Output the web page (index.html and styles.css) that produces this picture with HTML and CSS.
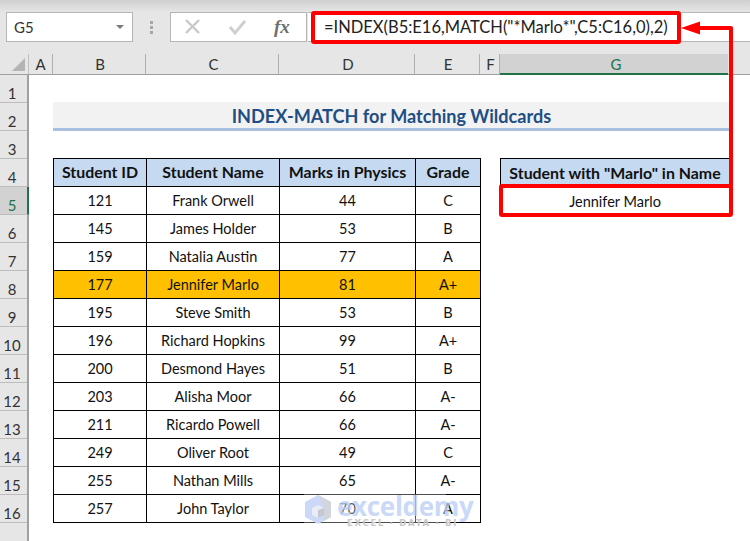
FILE: index.html
```html
<!DOCTYPE html>
<html lang="en">
<head>
<meta charset="utf-8">
<title>INDEX-MATCH for Matching Wildcards</title>
<link rel="stylesheet" href="styles.css">
</head>
<body>
<div class="app">
  <div class="topstrip"></div>
  <div class="fbar">
    <div class="namebox"><span>G5</span><i class="caret"></i></div>
    <div class="grip"><i></i><i></i><i></i></div>
    <div class="fbtns">
      <svg class="ficon" width="20" height="16" viewBox="0 0 20 16"><path d="M3 1l13 13M16 1L3 14" fill="none" stroke="#c8c8c8" stroke-width="2.4"/></svg>
      <svg class="ficon" width="20" height="16" viewBox="0 0 20 16"><path d="M3 8l5 6L18 2" fill="none" stroke="#cfcfcf" stroke-width="3"/></svg>
      <span class="fx">fx</span>
    </div>
    <div class="formula">=INDEX(B5:E16,MATCH("*Marlo*",C5:C16,0),2)</div>
  </div>
  <div class="colhead">
    <div class="corner"><i></i></div>
    <div class="ch a">A</div>
    <div class="ch b">B</div>
    <div class="ch c">C</div>
    <div class="ch d">D</div>
    <div class="ch e">E</div>
    <div class="ch f">F</div>
    <div class="ch g sel">G</div>
  </div>
  <div class="main">
    <div class="rowhead">
      <div class="rh">1</div><div class="rh">2</div><div class="rh">3</div><div class="rh">4</div>
      <div class="rh sel">5</div><div class="rh">6</div><div class="rh">7</div><div class="rh">8</div>
      <div class="rh">9</div><div class="rh">10</div><div class="rh">11</div><div class="rh">12</div>
      <div class="rh">13</div><div class="rh">14</div><div class="rh">15</div><div class="rh">16</div>
      <div class="rh"></div>
    </div>
    <div class="sheet">
      <div class="title">INDEX-MATCH for Matching Wildcards</div>
      <div class="tables">
        <div class="grid">
          <div class="hd">Student ID</div><div class="hd">Student Name</div><div class="hd">Marks in Physics</div><div class="hd">Grade</div>
          <div>121</div><div>Frank Orwell</div><div>44</div><div>C</div>
          <div>145</div><div>James Holder</div><div>53</div><div>B</div>
          <div>159</div><div>Natalia Austin</div><div>77</div><div>A</div>
          <div class="hl">177</div><div class="hl">Jennifer Marlo</div><div class="hl">81</div><div class="hl">A+</div>
          <div>195</div><div>Steve Smith</div><div>53</div><div>B</div>
          <div>196</div><div>Richard Hopkins</div><div>99</div><div>A+</div>
          <div>200</div><div>Desmond Hayes</div><div>51</div><div>B</div>
          <div>203</div><div>Alisha Moor</div><div>66</div><div>A-</div>
          <div>211</div><div>Ricardo Powell</div><div>66</div><div>A-</div>
          <div>249</div><div>Oliver Root</div><div>49</div><div>C</div>
          <div>255</div><div>Nathan Mills</div><div>65</div><div>A-</div>
          <div>257</div><div>John Taylor</div><div>70</div><div>A</div>
        </div>
        <div class="side">
          <div class="hd">Student with "Marlo" in Name</div>
          <div class="res">Jennifer Marlo</div>
        </div>
      </div>
    </div>
  </div>
  <svg class="annot" width="750" height="541" viewBox="0 0 750 541">
    <rect x="313" y="13" width="366" height="29" fill="none" stroke="#fe0000" stroke-width="4" rx="1"/>
    <rect x="501" y="186" width="230" height="29" fill="none" stroke="#fe0000" stroke-width="4" rx="1"/>
    <path d="M695 28H731V186" fill="none" stroke="#fe0000" stroke-width="4" stroke-linejoin="round"/>
    <path d="M681 28L700 21.5V34.5Z" fill="#fe0000"/>
  </svg>
  <div class="mark">
    <svg class="marklogo" width="28" height="31" viewBox="0 0 28 31"><path d="M14 1L27 8V23L14 30L1 23V8Z" fill="#cbd8f8"/><path d="M14 1L27 8V23L20 27V13Z" fill="#d2d5dc"/><path d="M8 14l6-3 6 3v7l-6 3-6-3z" fill="#e9ecf2"/><path d="M14 16l6-2v7l-6 3z" fill="#c3c8d2"/></svg>
    <div class="marktext"><div class="mk1">exceldemy</div><div class="mk2">EXCEL · DATA · BI</div></div>
  </div>
</div>
</body>
</html>
```
FILE: styles.css
```css
* { box-sizing: border-box; }
html, body { margin: 0; padding: 0; }
body { font-family: Lato, "Open Sans", sans-serif; color: #111; }
.app { position: relative; width: 750px; height: 541px; overflow: hidden; background: #e6e6e6; }
.topstrip { height: 12px; background: linear-gradient(#cfcfcf, #e6e6e6); }
.fbar { display: flex; align-items: stretch; height: 30px; }
.namebox { width: 127px; margin-left: 6px; background: #fff; border: 1px solid #b5b5b5; display: flex; align-items: center; justify-content: space-between; padding: 0 8px 0 7px; font-size: 15px; color: #333; }
.caret { width: 0; height: 0; border-left: 4px solid transparent; border-right: 4px solid transparent; border-top: 4px solid #7a7a7a; }
.grip { width: 37px; display: flex; flex-direction: column; align-items: center; justify-content: center; gap: 2px; }
.grip i { width: 3px; height: 3px; background: #a6a6a6; }
.fbtns { width: 137px; background: #fff; border: 1px solid #b5b5b5; display: flex; align-items: center; gap: 24px; padding-left: 12px; }
.ficon { flex: none; }
.fx { font-family: "Liberation Serif", serif; font-style: italic; font-weight: 700; font-size: 19px; color: #6f6f6f; margin-left: 3px; }
.formula { flex: 1; background: #fff; border-top: 1px solid #b5b5b5; border-bottom: 1px solid #b5b5b5; margin-left: 1px; padding-left: 16px; font-size: 16.5px; line-height: 28px; color: #222; white-space: nowrap; }
.colhead { display: flex; height: 21px; margin-top: 12px; border-bottom: 1px solid #9f9f9f; }
.corner { width: 29px; position: relative; border-right: 1px solid #c0c0c0; }
.corner i { position: absolute; left: 12px; top: 4px; width: 0; height: 0; border-left: 13px solid transparent; border-bottom: 13px solid #b4b4b4; }
.ch { text-align: center; font-size: 15px; line-height: 20px; border-right: 1px solid #b0b0b0; color: #333; }
.a { width: 24px; } .b { width: 93px; padding-left: 2px; } .c { width: 133px; padding-left: 3px; } .d { width: 136px; padding-left: 3px; } .e { width: 65px; padding-left: 2px; } .f { width: 20px; padding-left: 2px; }
.g { width: 228px; padding-left: 4px; border-right: none; }
.ch.sel { background: #d2d2d2; color: #217346; border-bottom: 2px solid #217346; height: 21px; }
.main { display: flex; height: 466px; }
.rowhead { width: 29px; flex: none; border-right: 2px solid #a0a0a0; }
.rh { height: 28px; border-bottom: 1px solid #bdbdbd; font-size: 15px; line-height: 37px; text-align: center; color: #333; padding-right: 3px; }
.rh.sel { background: #d2d2d2; color: #217346; border-right: 2px solid #217346; margin-right: -2px; padding-right: 3px; }
.sheet { flex: 1; background: #fff; padding: 27px 0 0 24px; }
.title { width: 677px; height: 29px; background: #f2f2f2; border-bottom: 3px solid #a9c0e0; color: #1f4e84; font-weight: 700; font-size: 18.1px; line-height: 29px; text-align: center; }
.tables { display: flex; margin-top: 27px; font-size: 14.5px; align-items: flex-start; }
.grid { display: grid; grid-template-columns: 93px 133px 136px 65px; grid-auto-rows: 28px; border-top: 1px solid #000; border-left: 1px solid #000; width: 428px; }
.grid > div { display: flex; align-items: center; justify-content: center; border-right: 1px solid #000; border-bottom: 1px solid #000; white-space: nowrap; }
.grid > .hd, .side > .hd { background: #c5d9f0; font-weight: 700; font-size: 15.9px; padding-bottom: 2px; }
.grid > .hl { background: #ffc000; }
.side { width: 229px; margin-left: 19px; display: grid; grid-auto-rows: 28px; border-top: 1px solid #000; border-left: 1px solid #000; }
.side > div { display: flex; align-items: center; justify-content: center; white-space: nowrap; }
.annot { position: absolute; left: 0; top: 0; pointer-events: none; }
.mark { position: absolute; left: 304px; top: 494px; width: 142px; height: 31px; display: flex; gap: 5px; background: rgba(255, 255, 255, .3); pointer-events: none; }
.marklogo { flex: none; }
.marktext { flex: none; width: 109px; }
.mk1 { font-size: 26px; line-height: 24px; font-weight: 700; color: #b9cdf6; opacity: .75; font-family: "Open Sans", sans-serif; letter-spacing: -.3px; }
.mk2 { font-size: 8.5px; line-height: 10px; letter-spacing: 1.7px; font-weight: 700; color: #c8c8c8; padding-left: 10px; font-family: "DejaVu Sans", sans-serif; white-space: nowrap; }
```
